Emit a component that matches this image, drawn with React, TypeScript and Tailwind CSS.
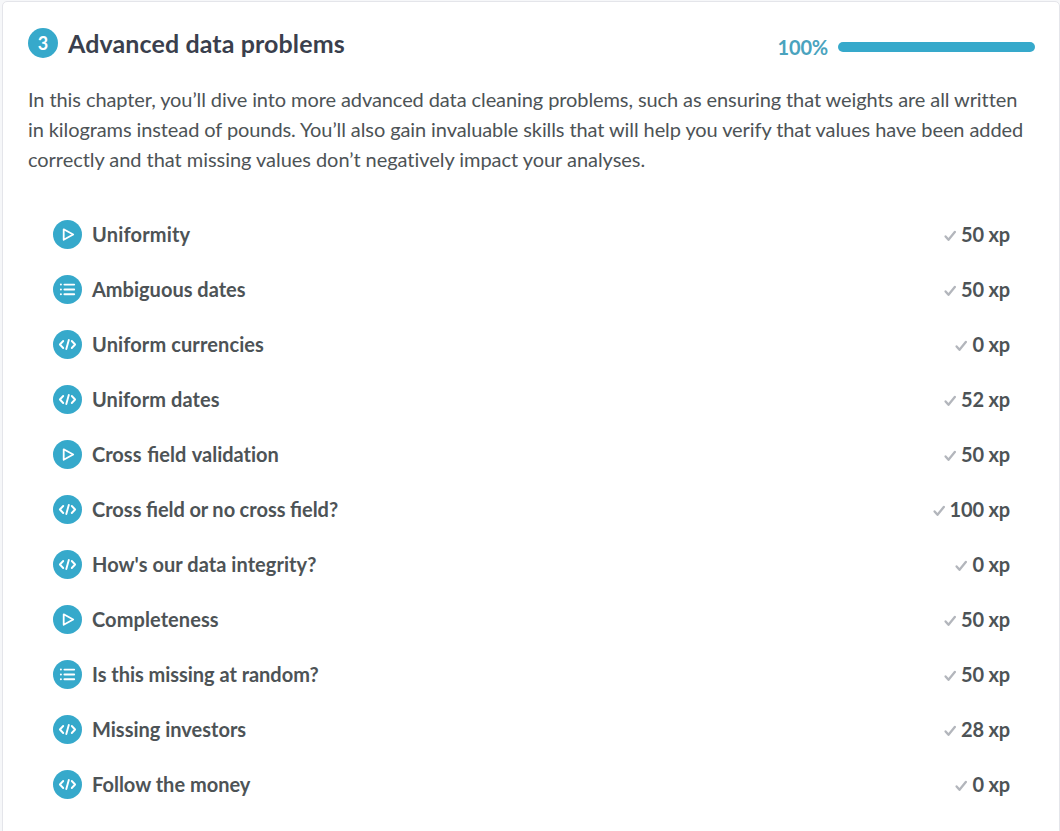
import React from "react";

type Kind = "video" | "choice" | "code";

interface Exercise {
  kind: Kind;
  title: string;
  xp: number;
  spacing?: string;
}

const exercises: Exercise[] = [
  { kind: "video", title: "Uniformity", xp: 50, spacing: "tracking-[0.18px]" },
  { kind: "choice", title: "Ambiguous dates", xp: 50 },
  { kind: "code", title: "Uniform currencies", xp: 0, spacing: "tracking-[0.11px]" },
  { kind: "code", title: "Uniform dates", xp: 52, spacing: "tracking-[0.08px]" },
  { kind: "video", title: "Cross field validation", xp: 50, spacing: "[word-spacing:1px]" },
  { kind: "code", title: "Cross field or no cross field?", xp: 100, spacing: "[word-spacing:-0.4px]" },
  { kind: "code", title: "How's our data integrity?", xp: 0, spacing: "tracking-[0.05px]" },
  { kind: "video", title: "Completeness", xp: 50, spacing: "tracking-[0.08px]" },
  { kind: "choice", title: "Is this missing at random?", xp: 50, spacing: "tracking-[-0.03px]" },
  { kind: "code", title: "Missing investors", xp: 28 },
  { kind: "code", title: "Follow the money", xp: 0 },
];

function KindIcon({ kind }: { kind: Kind }) {
  return (
    <svg className="size-[29px] shrink-0" viewBox="0 0 29 29" fill="none" stroke="#fff" strokeLinecap="round" strokeLinejoin="round">
      <circle cx="14.5" cy="14.5" r="14.5" fill="#36a9cb" stroke="none" />
      {kind === "video" && <path d="M10.7 9.3 20.2 14.5 10.7 19.7Z" strokeWidth="1.8" />}
      {kind === "choice" && (
        <>
          <path d="M11.4 9.6H21.2M11.4 14.5H21.2M11.4 19.2H21.2" strokeWidth="1.9" />
          <path d="M7.9 9.6h.01M7.9 14.5h.01M7.9 19.2h.01" strokeWidth="2" />
        </>
      )}
      {kind === "code" && (
        <path d="M10.2 11 6.9 14.5 10.2 18M18.8 11 22.1 14.5 18.8 18M15.8 10 13.3 19" strokeWidth="1.9" />
      )}
    </svg>
  );
}

function Check() {
  return (
    <svg className="mt-[3px] mr-[5px] h-[12px] w-[12px]" viewBox="0 0 12 12" fill="none">
      <path d="M1.6 6.4 4.5 9.8 10.8 2" stroke="#b3b6bc" strokeWidth="2.3" strokeLinecap="round" strokeLinejoin="round" />
    </svg>
  );
}

/* Only the "fi" of "field" is set as a ligature. */
function Title({ text }: { text: string }) {
  return (
    <>
      {text.split(/(field)/).map((part, i) =>
        part === "field" ? (
          <span key={i} className="[font-variant-ligatures:normal]">{part}</span>
        ) : (
          part
        ),
      )}
    </>
  );
}

export default function App() {
  return (
    <div className="h-[831px] overflow-hidden bg-[#f6f7f9] pt-px pl-[2px] font-['Lato',sans-serif] text-[20px] text-[#4d5356]">
      <section className="h-[840px] rounded-[5px] border border-[#e4e5ea] bg-white pr-[24px] pl-[25px]">
        <header className="flex h-[82px] items-start justify-between">
          <div className="flex items-start pt-[26px]">
            <span className="flex size-[30px] items-center justify-center rounded-full bg-[#36a9cb] text-[18px] leading-none font-bold text-white">
              3
            </span>
            <h1 className="ml-[10px] text-[25px] leading-[30px] font-bold tracking-[0.11px] text-[#3a3f4d]">
              Advanced data problems
            </h1>
          </div>
          <div className="flex items-center pt-[30px]">
            <span className="mr-[10px] text-[20px] leading-[30px] font-bold tracking-[-0.2px] text-[#4aa3be]">100%</span>
            <span className="h-[10px] w-[197px] rounded-full bg-[#36a9cb]" />
          </div>
        </header>
        <p className="leading-[30px] whitespace-nowrap">
          <span className="block tracking-[-0.09px]">
            In this chapter, you’ll dive into more advanced data cleaning problems, such as ensuring that weights are all written
          </span>
          <span className="block tracking-[-0.095px]">
            in kilograms instead of pounds. You’ll also gain invaluable skills that will help you verify that values have been added
          </span>
          <span className="block tracking-[-0.045px]">
            correctly and that missing values don’t negatively impact your analyses.
          </span>
        </p>
        <ul className="mt-[33px] pr-[25px] pl-[25px]">
          {exercises.map((e) => (
            <li key={e.title} className="flex h-[55px] items-center justify-between font-bold">
              <div className="flex items-center gap-[10px]">
                <KindIcon kind={e.kind} />
                <span className={`pb-[2px] leading-[28px] [font-variant-ligatures:none] ${e.spacing ?? ""}`}>
                  <Title text={e.title} />
                </span>
              </div>
              <div className="flex items-center">
                <Check />
                <span className="pb-[2px] leading-[28px] tracking-[-0.18px]">{e.xp} xp</span>
              </div>
            </li>
          ))}
        </ul>
      </section>
    </div>
  );
}
